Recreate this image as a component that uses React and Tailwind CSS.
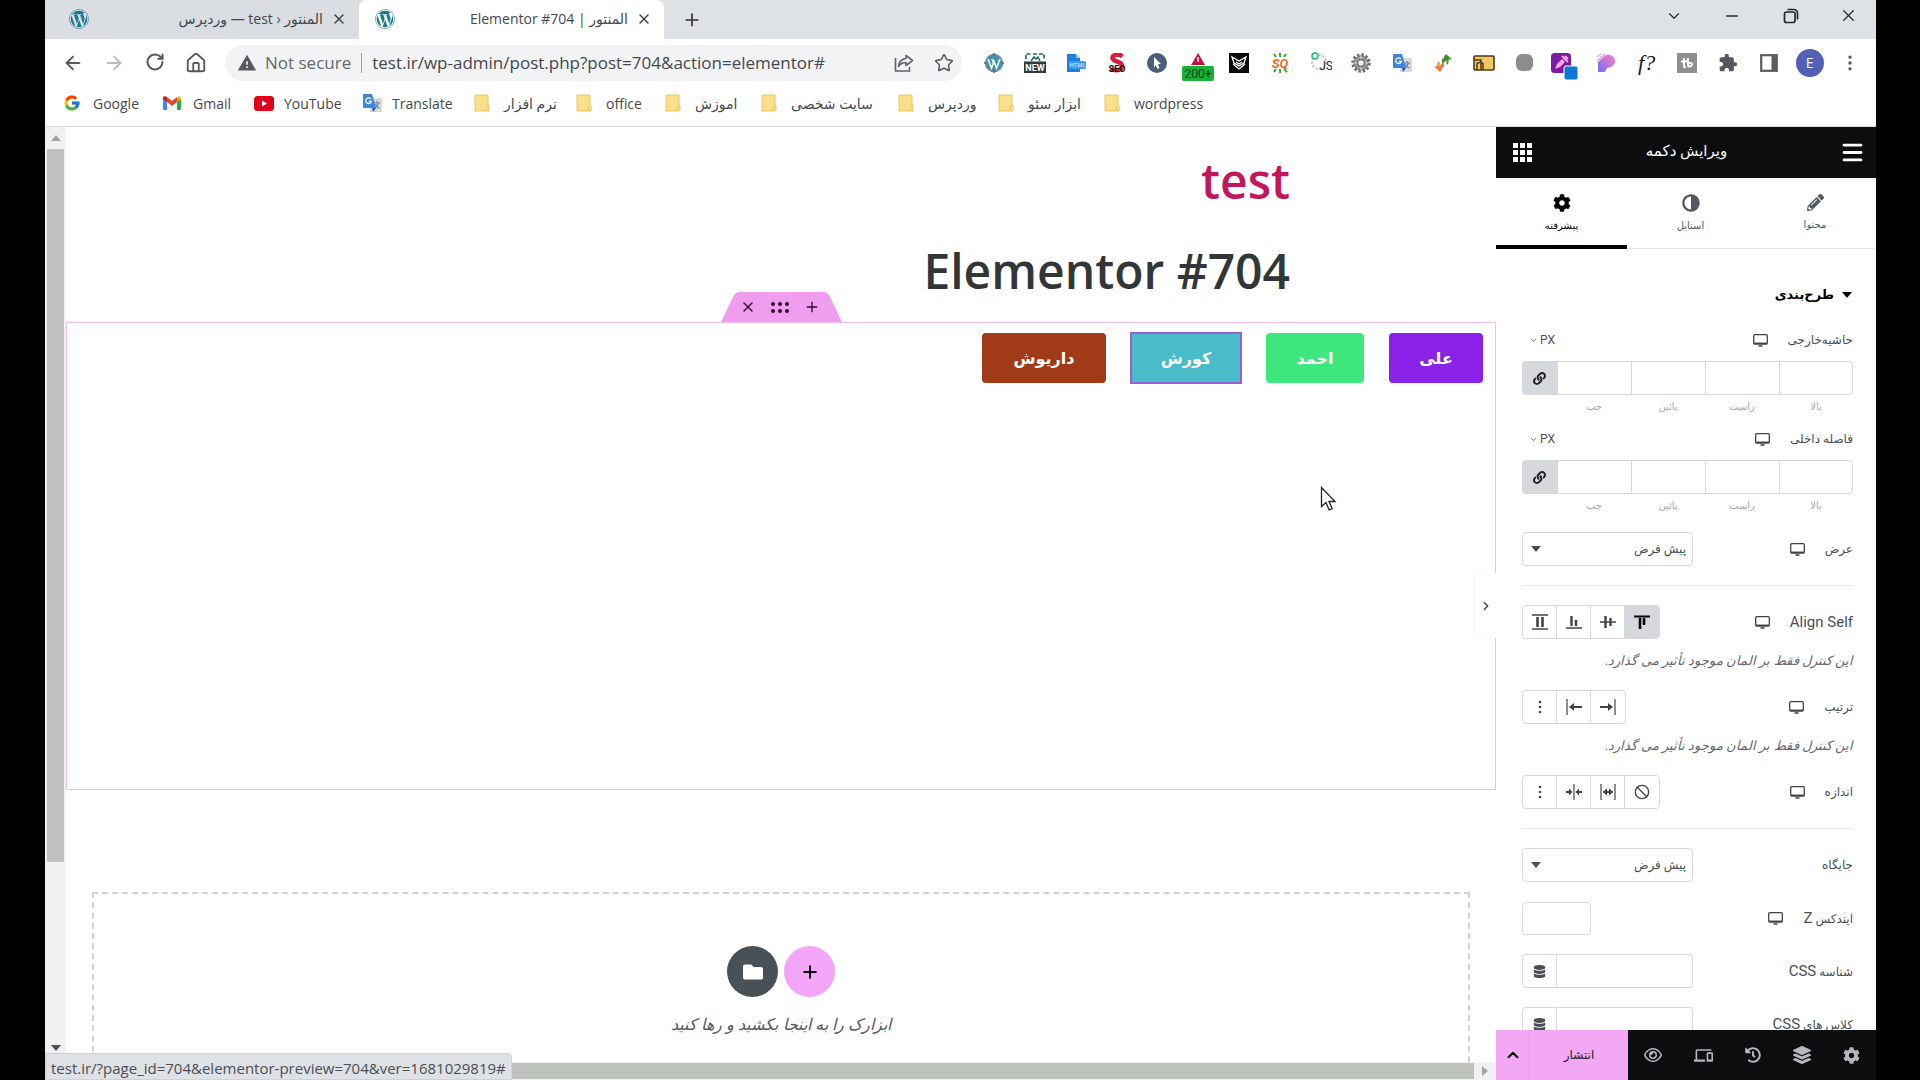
import React from "react";
import {
  ArrowLeft, ArrowRight, RotateCw, House, Star, X, Plus, ChevronDown, ChevronRight, ChevronUp, Minus, Copy, Ban, Menu, EllipsisVertical,
} from "lucide-react";
import {
  FaWordpress, FaCog, FaAdjust, FaPencilAlt, FaDatabase, FaFolder, FaHistory, FaLayerGroup, FaLink,
} from "react-icons/fa";
import { FcGoogle } from "react-icons/fc";
import { MdDevices, MdExtension, MdWarning } from "react-icons/md";
import { FaRegEye } from "react-icons/fa6";

const UI = "font-['Open_Sans','DejaVu_Sans',sans-serif]";
const PANEL = "font-[Roboto,'DejaVu_Sans',sans-serif]";

/* ---------- browser icons ---------- */

function TranslateIcon() {
  return (
    <svg width="20" height="20" viewBox="0 0 20 20" aria-hidden="true">
      <rect x="8" y="5" width="12" height="14" rx="1" fill="#d5d9de" />
      <path d="M12 10h6M15 8v2M13 15c2-1 3-3 3.500-5M13.500 11c.6 2 2 3.500 4 4" stroke="#7b8691" strokeWidth="1.200" fill="none" />
      <path d="M1 1h9l4 14H2a1 1 0 0 1-1-1z" fill="#3d86dd" />
      <path d="M10 15h4l-3 4z" fill="#2560b5" />
      <path d="M8.800 6A2.800 2.800 0 1 0 9.300 8.300H6.800" stroke="#fff" strokeWidth="1.300" fill="none" />
    </svg>
  );
}

function GmailIcon() {
  return (
    <svg width="18" height="14" viewBox="0 0 18 14" aria-hidden="true">
      <path d="M0 2v11a1 1 0 0 0 1 1h3V5z" fill="#4285f4" />
      <path d="M14 5v9h3a1 1 0 0 0 1-1V2z" fill="#34a853" />
      <path d="M4 1l5 4 5-4v5L9 10 4 6z" fill="#ea4335" />
      <path d="M0 2C0 0 2-.5 4 1v5L0 3z" fill="#c5221f" />
      <path d="M18 2c0-2-2-2.500-4-1v5l4-3z" fill="#fbbc04" />
    </svg>
  );
}

function YouTubeIcon() {
  return (
    <svg width="20" height="15" viewBox="0 0 20 15" aria-hidden="true">
      <rect width="20" height="15" rx="3.500" fill="#e0001b" />
      <path d="M8 4.500v6l5-3z" fill="#fff" />
    </svg>
  );
}

function FolderIcon() {
  return (
    <svg width="16" height="18" viewBox="0 0 16 18" aria-hidden="true">
      <path d="M1 1h13v10l1 1v5H1z" fill="#fbe08b" stroke="#e6c565" />
      <path d="M12 17v-4l2-2" stroke="#e6c565" fill="none" />
    </svg>
  );
}

function ShareIcon() {
  return (
    <svg width="20" height="20" viewBox="0 0 20 20" fill="none" stroke="#5f6368" strokeWidth="1.600" aria-hidden="true">
      <path d="M1.500 5v13h14v-4" />
      <path d="M12 2.500l6.500 5-6.500 5V9.500c-3.500 0-6 1.500-7.500 4 .5-5 3-7.500 7.500-8z" strokeLinejoin="round" />
    </svg>
  );
}

function RestoreIcon() {
  return (
    <svg width="16" height="16" viewBox="0 0 16 16" fill="none" stroke="currentColor" strokeWidth="1.700" aria-hidden="true">
      <rect x="1.500" y="4" width="10.500" height="10.500" rx="2" />
      <path d="M4.500 1.500H11a3.500 3.500 0 0 1 3.500 3.500v6.500" />
    </svg>
  );
}

const extensions = [
  ["WordPress detector", (
    <svg width="20" height="20" viewBox="0 0 20 20"><circle cx="10" cy="10" r="8.500" fill="#3b93b3" /><circle cx="10" cy="10" r="8.500" fill="none" stroke="#7a8a92" strokeWidth="1.500" /><path d="M4 6l3.500 9L10 8.500l2.500 6.500L16 6M8 6l2 5" stroke="#fff" strokeWidth="1.600" fill="none" /><path d="M10 0v3M10 17v3M0 10h2M18 10h2" stroke="#59666d" strokeWidth="1.500" /></svg>
  )],
  ["New captures", (
    <svg width="22" height="20" viewBox="0 0 22 20"><path d="M2 6V1h5M9 1h4M15 1h5v5" stroke="#1a6b55" strokeWidth="1.600" fill="none" strokeDasharray="4 1.500" /><path d="M7 8l3-4 2 2 2-2 2 4" stroke="#1a6b55" strokeWidth="1.500" fill="none" /><rect x="0" y="8.500" width="22" height="11.500" fill="#2f3a3c" /><text x="11" y="17.800" fontSize="9" fontWeight="700" textAnchor="middle" fill="#fff" fontFamily="Roboto">NEW</text></svg>
  )],
  ["HTML exporter", (
    <svg width="20" height="20" viewBox="0 0 20 20"><path d="M1 1h9l4 4v14H1z" fill="#1d7fe0" /><path d="M10 1l4 4h-4z" fill="#9ccaf7" /><rect x="3" y="8" width="17" height="8" rx="1.500" fill="#3d9bf3" /><text x="11.500" y="14.300" fontSize="6" textAnchor="middle" fill="#d8edff" fontFamily="Roboto">HTML</text></svg>
  )],
  ["SEO", (
    <svg width="20" height="20" viewBox="0 0 20 20"><path d="M15.500 3.500C12 .5 5.500 1.500 5.500 5c0 4 9.500 3 9.500 8 0 5-7 5-11 2.500" stroke="#d3203c" strokeWidth="4.500" fill="none" /><text x="10" y="19" fontSize="9" fontWeight="700" textAnchor="middle" fill="#260a0e" fontFamily="Roboto">SEO</text></svg>
  )],
  ["Pointer", (
    <svg width="20" height="20" viewBox="0 0 20 20"><circle cx="10" cy="10" r="10" fill="#4b6076" /><path d="M7 4l7 7-3.200.300 1.700 3.700-2 1-1.700-3.700L7 14.500z" fill="#fff" /></svg>
  )],
  ["Alerts", (
    <svg width="34" height="30" viewBox="0 0 34 30"><path d="M17 1l7 12H10z" fill="#c2123a" /><path d="M17 5v5" stroke="#fff" strokeWidth="1.500" /><rect x="1" y="14" width="32" height="15" rx="2" fill="#16b336" /><text x="17" y="26" fontSize="12" textAnchor="middle" fill="#07380f" fontFamily="Roboto">200+</text></svg>
  )],
  ["Owl", (
    <svg width="20" height="20" viewBox="0 0 20 20"><rect width="20" height="20" fill="#0b0b0b" /><path d="M3 4l7 4 7-4-2 6-5 3-5-3zM4 11l6 5 6-5M7 9l3 2 3-2" stroke="#fff" strokeWidth="1.300" fill="none" /></svg>
  )],
  ["SQ", (
    <svg width="20" height="20" viewBox="0 0 20 20"><path d="M6 4L4 1M10 4V0M14 4l2-3M6 16l-2 3M10 16v4M14 16l3 3" stroke="#43a32b" strokeWidth="2" /><text x="10" y="15" fontSize="13" fontWeight="700" fontStyle="italic" textAnchor="middle" fill="#ef6a1c" fontFamily="Roboto">SQ</text></svg>
  )],
  ["JS toggle", (
    <svg width="22" height="22" viewBox="0 0 22 22"><circle cx="9" cy="10" r="7" fill="none" stroke="#c4c8c6" strokeWidth="2" strokeDasharray="2.500 1.500" /><circle cx="5" cy="4" r="3" fill="#d9f3e6" stroke="#2eb67d" strokeWidth="1.500" /><text x="16" y="18" fontSize="12" textAnchor="middle" fill="#2b2b2b" fontFamily="Roboto">JS</text></svg>
  )],
  ["Gear", (
    <svg width="20" height="20" viewBox="0 0 20 20"><circle cx="10" cy="10" r="8.500" fill="none" stroke="#6f6f6f" strokeWidth="2.500" strokeDasharray="2.600 1.850" /><circle cx="10" cy="10" r="7" fill="#9b9b9b" stroke="#666" /><circle cx="10" cy="10" r="3.500" fill="#eee" stroke="#6f6f6f" strokeWidth="1.500" /><path d="M10 3v3M10 14v3M3 10h3M14 10h3" stroke="#ddd" strokeWidth="1.200" /></svg>
  )],
  ["Google Translate", <TranslateIcon />],
  ["Sync", (
    <svg width="20" height="20" viewBox="0 0 20 20"><path d="M9 12V7c0-1 1-2 2-2V3.500L13 1l6 5.500h-3.500V10c0 1-2 1.500-2 1.500V7z" fill="#3f8f2f" /><path d="M11 8v5c0 1-1 2-2 2v1.500L7 19l-6-5.500h3.500V10c0-1 2-1.500 2-1.500V13z" fill="#ee7a3b" /></svg>
  )],
  ["Cards", (
    <svg width="22" height="16" viewBox="0 0 22 16"><rect x="1" y="1" width="20" height="14" rx="1" fill="#f6c665" stroke="#4d3b19" strokeWidth="1.600" /><path d="M1 5h7v10M4 15V9c0-2 6-2 6 0v6" fill="none" stroke="#4d3b19" strokeWidth="1.500" /></svg>
  )],
  ["Placeholder", <span className="block size-[17px] rounded-md bg-[#8b8d8c]" />],
  ["Color picker", (
    <svg width="28" height="28" viewBox="0 0 28 28"><rect x="0" y="0" width="20" height="20" rx="3.500" fill="#7c1aa6" /><path d="M4 16l2-5 5-5 3 3-5 5z" fill="#f9a5e6" /><path d="M11 3l6 6M14 3l3 3" stroke="#f9a5e6" strokeWidth="2" /><rect x="13" y="13" width="14" height="14" rx="2" fill="#0d78d6" stroke="#fff" /></svg>
  )],
  ["Palette", (
    <svg width="18" height="20" viewBox="0 0 18 20"><defs><linearGradient id="pg" x1="0" y1="1" x2="1" y2="0"><stop offset="0" stopColor="#7a6bf5" /><stop offset="1" stopColor="#fb7fc4" /></linearGradient></defs><path d="M1 9l8-7c5-1 9 2 9 6s-4 7-8 7l-2 4H1z" fill="url(#pg)" /><path d="M0 4l4-3M0 8l8-7" stroke="#e8a4e4" strokeWidth="1.500" /></svg>
  )],
  ["WhatFont", <span className="font-['Liberation_Serif',serif] text-[22px] leading-5 text-[#161616] italic">f?</span>],
  ["TubeBuddy", (
    <svg width="20" height="20" viewBox="0 0 20 20"><rect width="20" height="20" fill="#8f8f8f" /><path d="M7 5v8c0 1 1 1.500 2 1M4 8.500h5l2-2M11 5v8.500M11 10.500c4-3 6.500 3.500 0 3" stroke="#fff" strokeWidth="2" fill="none" /></svg>
  )],
  ["Extensions", <MdExtension className="size-5 text-[#54585c]" />],
  ["Side panel", (
    <svg width="18" height="18" viewBox="0 0 18 18"><rect x="1.200" y="1.200" width="15.600" height="15.600" fill="#fff" stroke="#5a5d60" strokeWidth="2.200" /><rect x="11.500" y="1" width="5.500" height="16" fill="#5a5d60" /></svg>
  )],
  ["Profile", <span className="flex size-7 items-center justify-center rounded-full bg-[#5360b5] text-sm text-white">E</span>],
  ["Browser menu", <EllipsisVertical className="size-5 text-[#54585c]" fill="currentColor" />],
];

const bookmarks = [
  ["Google", <FcGoogle className="size-[18px]" />, "w-[100px]"],
  ["Gmail", <GmailIcon />, "w-[91px]"],
  ["YouTube", <YouTubeIcon />, "w-[108px]"],
  ["Translate", <TranslateIcon />, "w-[112px]"],
  ["نرم افزار", <FolderIcon />, "w-[102px]"],
  ["office", <FolderIcon />, "w-[89px]"],
  ["اموزش", <FolderIcon />, "w-[96px]"],
  ["سایت شخصی", <FolderIcon />, "w-[137px]"],
  ["وردپرس", <FolderIcon />, "w-[100px]"],
  ["ابزار سئو", <FolderIcon />, "w-[106px]"],
  ["wordpress", <FolderIcon />, "w-[110px]"],
];

function Tab({ title, active }) {
  return (
    <div className={active ? "flex h-full w-[305px] items-center rounded-t-lg bg-white pr-2.5 pb-0.5 pl-4" : "flex h-full w-[314px] items-center rounded-br-lg bg-[#dadde2] pr-2.5 pb-0.5 pl-6"}>
      <FaWordpress className="size-5 shrink-0 text-[#1b7890]" />
      <span dir="rtl" className="min-w-0 flex-1 truncate pr-1.5 text-[14px] text-[#45484c]">{title}</span>
      <button aria-label="Close tab" className="flex size-5 items-center justify-center text-[#3c4043]"><X className="size-4" /></button>
    </div>
  );
}

function Browser() {
  return (
    <header className={`${UI} shrink-0 border-b border-[#d9dbdc] bg-white`}>
      <div className="flex h-[39px] items-center bg-[#dee1e6]">
        <Tab title={"المنتور ‹ test — وردپرس"} />
        <Tab title="المنتور | Elementor #704" active />
        <button aria-label="New tab" className="ml-4 flex size-6 items-center justify-center text-[#303236]"><Plus className="size-5" /></button>
        <div className="ml-auto flex h-7 items-center pb-2 text-[#26282b]">
          <button aria-label="Search tabs" className="flex w-[59px] justify-center"><ChevronDown className="size-[18px]" strokeWidth={1.5} /></button>
          <button aria-label="Minimize" className="flex w-[58px] justify-center"><Minus className="size-[18px]" strokeWidth={1.8} /></button>
          <button aria-label="Restore" className="flex w-[59px] justify-center"><RestoreIcon /></button>
          <button aria-label="Close" className="flex w-[56px] justify-center"><X className="size-[19px]" strokeWidth={1.6} /></button>
        </div>
      </div>
      <div className="flex h-[47px] items-center pr-[5px] pl-[7px]">
        <div className="flex text-[#55585c]">
          <button aria-label="Back" className="flex w-[41px] justify-center"><ArrowLeft className="size-[22px]" /></button>
          <button aria-label="Forward" className="flex w-[41px] justify-center text-[#b9bbbe]"><ArrowRight className="size-[22px]" /></button>
          <button aria-label="Reload" className="flex w-[41px] justify-center"><RotateCw className="size-5" strokeWidth={2.4} /></button>
          <button aria-label="Home" className="flex w-[41px] justify-center"><House className="size-[22px]" /></button>
        </div>
        <div className="ml-[9px] flex h-9 min-w-0 flex-1 items-center rounded-full bg-[#f1f3f4] pr-2 pl-3 text-[17px]">
          <MdWarning className="size-5 shrink-0 text-[#55585c]" />
          <span className="ml-2 shrink-0 text-[#66696d]">Not secure</span>
          <span className="mx-2.5 h-5 w-px shrink-0 bg-[#9aa0a6]" />
          <input aria-label="Address" dir="ltr" className="min-w-0 flex-1 bg-transparent text-[#45484c] outline-none" defaultValue="test.ir/wp-admin/post.php?post=704&action=elementor#" />
          <button aria-label="Share" className="mr-5"><ShareIcon /></button>
          <button aria-label="Bookmark"><Star className="size-5 text-[#55585c]" strokeWidth={1.8} /></button>
        </div>
        <div className="ml-3 flex w-[897px] shrink-0">
          {extensions.map(([name, icon]) => (
            <button key={name} aria-label={name} className={name === "Alerts" || name === "Color picker" ? "flex h-8 min-w-0 flex-1 items-center justify-center pt-2" : "flex h-8 min-w-0 flex-1 items-center justify-center"}>{icon}</button>
          ))}
        </div>
      </div>
      <nav className="flex h-10 items-center pb-1.5 pl-[18px] text-[14px] text-[#45484c]">
        {bookmarks.map(([name, icon, width]) => (
          <a key={name} href="#" className={`${width} flex items-center gap-2.5 whitespace-nowrap`}>
            <span className="flex w-5 shrink-0 items-center">{icon}</span>{name}
          </a>
        ))}
      </nav>
    </header>
  );
}

/* ---------- page preview ---------- */

const TRIANGLES = {
  up: "M0 6l5-6 5 6z",
  down: "M0 0l5 6 5-6z",
};

function Triangle({ dir, className }) {
  return <svg width="10" height="6" viewBox="0 0 10 6" fill="currentColor" className={className} aria-hidden="true"><path d={TRIANGLES[dir]} /></svg>;
}

const pageButtons = [
  ["علی", "w-[94px] bg-[#8a22ea]"],
  ["احمد", "w-[98px] bg-[#3fe87f]"],
  ["کورش", "w-[110px] bg-[#4abbc8]"],
  ["داریوش", "w-[124px] bg-[#a13a16]"],
];

function Preview() {
  return (
    <main className={`${UI} relative flex min-w-0 flex-1 bg-white`}>
      <div className="flex w-[21px] shrink-0 flex-col items-center bg-[#f1f1f1] pt-2 text-[#505050]">
        <Triangle dir="up" className="text-[#a3a3a3]" />
        <div className="mt-2 h-[713px] w-[17px] bg-[#c1c1c1]" />
        <Triangle dir="down" className="mt-auto mb-[29px]" />
      </div>
      <div className="flex min-w-0 flex-1 flex-col">
        <div className="pr-[206px] text-right text-[48px] leading-[56px] font-semibold">
          <h2 className="mt-[26px] text-[#c2185b]"><a href="#">test</a></h2>
          <h1 className="mt-[34px] text-[#333638]">Elementor #704</h1>
        </div>
        <section className="relative mt-[23px] h-[468px] border border-[#efbfe9] px-3 pt-[10px]">
          <div className="absolute -top-[31px] left-[654px] flex h-[30px] w-[121px] items-center justify-center pr-1 text-[#2b1028]">
            <svg className="absolute inset-0" width="121" height="30" viewBox="0 0 121 30" aria-hidden="true">
              <path d="M0 30L12 5Q14 0 19 0H102Q107 0 109 5L121 30z" fill="#f09df0" />
            </svg>
            <div className="relative flex items-center gap-[15px]">
              <button aria-label="Delete section"><X className="size-4" /></button>
              <button aria-label="Edit section" className="grid grid-cols-3 gap-[3px]">
                {[0, 1, 2, 3, 4, 5].map((i) => <span key={i} className="size-1 rounded-full bg-[#2b1028]" />)}
              </button>
              <button aria-label="Add section"><Plus className="size-4" /></button>
            </div>
          </div>
          <div dir="rtl" className="flex gap-[25px]">
            {pageButtons.map(([name, style]) => (
              <div key={name} className={name === "کورش" ? "outline-2 -outline-offset-1 outline-[#9a5fd0]" : ""}>
                <button className={`${style} block h-[50px] rounded text-base font-bold text-white`}>{name}</button>
              </div>
            ))}
          </div>
        </section>
        <section className="mx-[26px] mt-[102px] flex min-h-0 flex-1 flex-col items-center overflow-hidden border-2 border-b-0 border-dashed border-[#d0d3d4] pt-[52px]">
          <div className="flex gap-1.5">
            <button aria-label="Template library" className="flex size-[51px] items-center justify-center rounded-full bg-[#495157] text-white"><FaFolder className="size-5" /></button>
            <button aria-label="Add new container" className="flex size-[51px] items-center justify-center rounded-full bg-[#f3a6f7] text-black"><Plus className="size-5" strokeWidth={2.4} /></button>
          </div>
          <p dir="rtl" className="mt-[15px] text-base leading-6 text-[#55595c] italic">ابزارک را به اینجا بکشید و رها کنید</p>
        </section>
        <div className="flex h-[18px] shrink-0 items-center bg-[#f1f1f1] text-[#a3a3a3]">
          <div className="h-4 flex-1 bg-[#bfc1bf]" />
          <Triangle dir="up" className="mx-[6px] rotate-90" />
        </div>
      </div>
      <div className="absolute bottom-0 left-0 flex h-[27px] items-center rounded-tr border border-[#cfd1d3] bg-[#dee1e6] px-[5px] pt-1 text-[15px] whitespace-nowrap text-[#4c4f53]">
        test.ir/?page_id=704&amp;elementor-preview=704&amp;ver=1681029819#
      </div>
      <button aria-label="Collapse panel" className="absolute top-[446px] right-0 flex h-[65px] w-[21px] items-center justify-center rounded-l bg-white text-[#444] shadow-[-1px_0_2px_#f0f0f0]"><ChevronRight className="size-[14px]" strokeWidth={2.4} /></button>
      <svg className="absolute top-[359px] right-[159px]" width="17" height="26" viewBox="0 0 17 26" aria-hidden="true">
        <path d="M1.500 1.500v19l4.500-4 3.200 7.500 3-1.300L9 15.500h6z" fill="#fff" stroke="#222" strokeWidth="1.300" />
      </svg>
    </main>
  );
}

/* ---------- editor panel ---------- */

function Monitor() {
  return (
    <svg width="15" height="13" viewBox="0 0 15 13" fill="none" stroke="#3f444b" aria-hidden="true">
      <rect x=".7" y=".7" width="13.600" height="9.300" rx="1" strokeWidth="1.300" />
      <path d="M1 9.300h13" strokeWidth="1.500" /><path d="M5.500 12h4" strokeWidth="1.500" />
    </svg>
  );
}

function Label({ children, responsive, htmlFor }) {
  return (
    <div className="flex items-center gap-5">
      {responsive && <button aria-label="Responsive mode"><Monitor /></button>}
      <label dir="rtl" htmlFor={htmlFor} className="whitespace-nowrap">{children}</label>
    </div>
  );
}

const sides = ["چپ", "پائین", "راست", "بالا"];

function Dimensions({ label, id }) {
  return (
    <fieldset className="mt-[15px] first-of-type:mt-[19px]">
      <div className="flex h-5 items-center justify-between">
        <button className="ml-[7px] flex items-center gap-0.5 text-xs"><ChevronDown className="size-[9px]" />PX</button>
        <Label responsive htmlFor={`${id}-3`}>{label}</Label>
      </div>
      <div className="mt-[11px] flex">
        <button aria-label="Link values" className="flex h-[34px] w-[35px] shrink-0 items-center justify-center rounded-l bg-[#d5d8dc] text-[#1f2124]"><FaLink className="size-[13px]" /></button>
        {sides.map((side, i) => (
          <div key={side} className="flex-1">
            <input id={`${id}-${i}`} className={i === 3 ? "block h-[34px] w-full rounded-r border border-[#d5d8dc]" : "block h-[34px] w-full border-y border-l border-[#d5d8dc]"} />
            <label dir="rtl" htmlFor={`${id}-${i}`} className="mt-1 block h-[15px] text-center text-[10px] leading-4 text-[#a4a8ab]">{side}</label>
          </div>
        ))}
      </div>
    </fieldset>
  );
}

function Row({ children }) {
  return <div className="mt-[19px] flex h-[34px] items-center justify-between">{children}</div>;
}

function SelectBox({ id }) {
  return (
    <div className="relative h-[34px] w-[171px]">
      <select id={id} dir="rtl" className="h-full w-full appearance-none rounded border border-[#d5d8dc] bg-white px-1.5 text-[12px]">
        <option>پیش فرض</option>
      </select>
      <Triangle dir="down" className="pointer-events-none absolute top-[14px] left-[9px]" />
    </div>
  );
}

function Glyph({ children }) {
  return <svg width="16" height="16" viewBox="0 0 16 16" fill="none" stroke="currentColor" strokeWidth="1.600" aria-hidden="true">{children}</svg>;
}

const alignIcons = [
  ["Stretch", <Glyph><path d="M0 1h16M0 15h16" /><path d="M5.500 3v10M10.500 3v10" strokeWidth="2.600" /></Glyph>],
  ["End", <Glyph><path d="M0 14h16" /><path d="M5.500 2v10" strokeWidth="2.400" /><path d="M10 6v6" strokeWidth="2.400" /></Glyph>],
  ["Center", <Glyph><path d="M0 8h16" /><path d="M5.500 2v12M10.500 4v8" strokeWidth="2.400" /></Glyph>],
  ["Start", <Glyph><path d="M0 2.500h16" strokeWidth="2" /><path d="M6 4v11M10 4v7" strokeWidth="2.600" /></Glyph>],
];
const dots = <svg width="4" height="14" viewBox="0 0 4 14" fill="currentColor" aria-hidden="true"><circle cx="2" cy="2" r="1.300" /><circle cx="2" cy="7" r="1.300" /><circle cx="2" cy="12" r="1.300" /></svg>;
const orderIcons = [
  ["Custom order", dots],
  ["First", <Glyph><path d="M1 0v16" strokeWidth="1.200" /><path d="M5 8h11" strokeWidth="2" /><path d="M3 8l5-4v8z" fill="currentColor" stroke="none" /></Glyph>],
  ["Last", <Glyph><path d="M15 0v16" strokeWidth="1.200" /><path d="M0 8h11" strokeWidth="2" /><path d="M13 8L8 4v8z" fill="currentColor" stroke="none" /></Glyph>],
];
const sizeIcons = [
  ["Custom size", dots],
  ["Shrink", <Glyph><path d="M8 0v16" strokeWidth="1.200" /><path d="M0 8h4M12 8h4" strokeWidth="2" /><path d="M6.500 8L3 4.500v7zM9.500 8L13 4.500v7z" fill="currentColor" stroke="none" /></Glyph>],
  ["Grow", <Glyph><path d="M1 0v16M15 0v16" strokeWidth="1.200" /><path d="M5 8h6" strokeWidth="2" /><path d="M2.500 8L7 4.500v7zM13.500 8L9 4.500v7z" fill="currentColor" stroke="none" /></Glyph>],
  ["None", <Ban className="size-4" />],
];

function Choices({ items, active }) {
  return (
    <div className="flex h-[34px] divide-x divide-[#d5d8dc] overflow-hidden rounded border border-[#d5d8dc] text-[#3f444b]">
      {items.map(([name, icon]) => (
        <button key={name} aria-label={name} className={name === active ? "flex w-[34px] items-center justify-center bg-[#d5d8dc] text-black" : "flex w-[34px] items-center justify-center"}>{icon}</button>
      ))}
    </div>
  );
}

function Note() {
  return <p dir="rtl" className="mt-3 h-5 text-[13px] leading-5 whitespace-nowrap text-[#63686c] italic">این کنترل فقط بر المان موجود تأثیر می گذارد.</p>;
}

function DynamicInput({ id }) {
  return (
    <div className="flex h-[34px] w-[171px]">
      <button aria-label="Dynamic tags" className="flex w-[35px] items-center justify-center rounded-l border border-[#d5d8dc]"><FaDatabase className="size-[13px]" /></button>
      <input id={id} className="min-w-0 flex-1 rounded-r border border-l-0 border-[#d5d8dc]" />
    </div>
  );
}

function PanelTab({ icon, label, active }) {
  return (
    <button role="tab" aria-selected={!!active} className={active ? "flex flex-col items-center gap-1.5 border-b-4 border-black pt-4 text-[10px] text-black" : "flex flex-col items-center gap-1.5 border-b border-[#e6e9ec] pt-4 text-[10px] text-[#515962]"}>
      {icon}
      <span>{label}</span>
    </button>
  );
}

function Panel() {
  return (
    <aside className={`${PANEL} flex w-[380px] shrink-0 flex-col bg-white text-[12px] text-[#4a4f55]`}>
      <div className="flex h-[51px] shrink-0 items-center justify-between bg-[#0c0d0e] pr-3 pl-[17px] text-white">
        <button aria-label="Widgets" className="grid grid-cols-3 gap-0.5">
          {[0, 1, 2, 3, 4, 5, 6, 7, 8].map((i) => <span key={i} className="size-[5px] bg-white" />)}
        </button>
        <h2 dir="rtl" className="pb-0.5 text-[15px]">ویرایش دکمه</h2>
        <button aria-label="Menu"><Menu className="size-[23px] scale-110" strokeWidth={2.8} /></button>
      </div>
      <div role="tablist" className="grid h-[71px] shrink-0 grid-cols-[131fr_127fr_122fr]">
        <PanelTab active icon={<FaCog className="size-[18px]" />} label="پیشرفته" />
        <PanelTab icon={<FaAdjust className="size-[18px] rotate-180" />} label="استایل" />
        <PanelTab icon={<FaPencilAlt className="size-[17px]" />} label="محتوا" />
      </div>
      <div className="min-h-0 flex-1 overflow-hidden pr-[23px] pl-[26px]">
        <button dir="rtl" className="mt-[30px] flex h-8 w-full items-center gap-2 text-[13px] font-bold text-black"><Triangle dir="down" className="mr-px" />طرح‌بندی</button>
        <Dimensions id="margin" label="حاشیه‌خارجی" />
        <Dimensions id="padding" label="فاصله داخلی" />
        <Row><SelectBox id="width" /><Label responsive htmlFor="width">عرض</Label></Row>
        <hr className="mt-[19px] border-[#e6e9ec]" />
        <Row>
          <Choices items={alignIcons} active="Start" />
          <Label responsive><span className="text-[15px]">Align Self</span></Label>
        </Row>
        <Note />
        <Row><Choices items={orderIcons} /><Label responsive>ترتیب</Label></Row>
        <Note />
        <Row><Choices items={sizeIcons} /><Label responsive>اندازه</Label></Row>
        <hr className="mt-[19px] border-[#e6e9ec]" />
        <Row><SelectBox id="position" /><Label htmlFor="position">جایگاه</Label></Row>
        <Row>
          <input id="z" className="h-[33px] w-[69px] rounded border border-[#d5d8dc]" />
          <Label responsive htmlFor="z">ایندکس <span className="text-[15px]">Z</span></Label>
        </Row>
        <Row><DynamicInput id="css-id" /><Label htmlFor="css-id">شناسه <span className="text-[15px]">CSS</span></Label></Row>
        <Row><DynamicInput id="css-class" /><Label htmlFor="css-class">کلاس های <span className="text-[15px]">CSS</span></Label></Row>
      </div>
      <footer className="flex h-[50px] shrink-0 bg-[#0c0d0e] text-[#b4b8bc]">
        <button aria-label="Save options" className="flex w-[34px] items-center justify-center border-r border-[#eb9bee] bg-[#f3a8f6] text-black"><ChevronUp className="size-[18px]" strokeWidth={2.6} /></button>
        <button className="w-[98px] bg-[#f3a8f6] text-[12px] text-[#1f2124]">انتشار</button>
        <div className="flex flex-1 justify-around">
          <button aria-label="Preview"><FaRegEye className="size-[18px]" /></button>
          <button aria-label="Responsive"><MdDevices className="size-[19px]" /></button>
          <button aria-label="History"><FaHistory className="size-4" /></button>
          <button aria-label="Structure"><FaLayerGroup className="size-[18px]" /></button>
          <button aria-label="Settings"><FaCog className="size-[17px]" /></button>
        </div>
      </footer>
    </aside>
  );
}

export default function App() {
  return (
    <div className="flex h-screen flex-col overflow-hidden bg-black pr-[44px] pl-[45px]">
      <Browser />
      <div className="flex min-h-0 flex-1">
        <Preview />
        <Panel />
      </div>
    </div>
  );
}
